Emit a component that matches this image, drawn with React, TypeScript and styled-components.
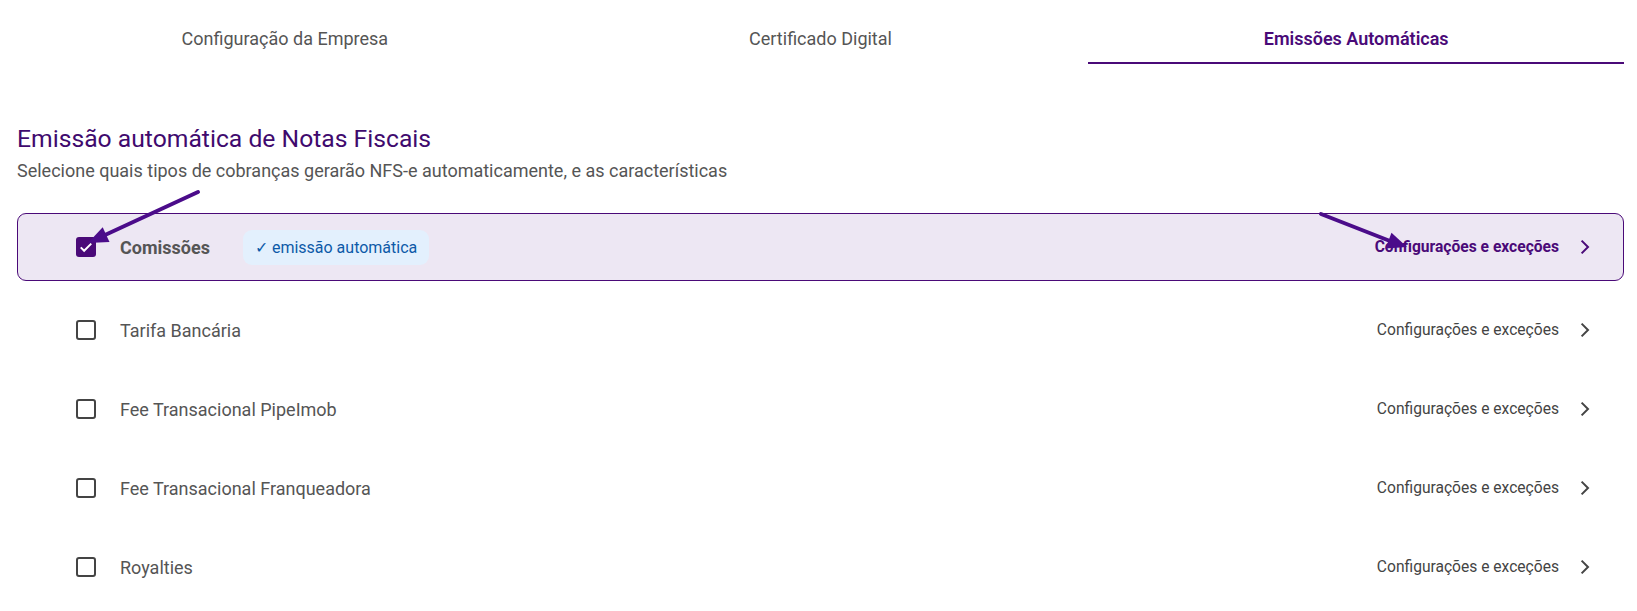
import React from "react";
import styled, { createGlobalStyle } from "styled-components";

const GlobalStyle = createGlobalStyle`
  body {
    margin: 0;
    background: #ffffff;
    font-family: Roboto, "Liberation Sans", Arial, sans-serif;
  }
`;

const Page = styled.div`
  position: relative;
  padding: 0 13px 0 17px;
`;

const Tabs = styled.div`
  display: flex;
  margin-top: 14px;
`;

const Tab = styled.div<{ active?: boolean }>`
  flex: 1;
  height: 48px;
  display: flex;
  align-items: center;
  justify-content: center;
  font-size: 18px;
  font-weight: ${(p) => (p.active ? 600 : 400)};
  color: ${(p) => (p.active ? "#4a0a78" : "#555555")};
  border-bottom: 2px solid ${(p) => (p.active ? "#4a0a78" : "transparent")};
`;

const Title = styled.h2`
  margin: 60px 0 0;
  font-size: 24.7px;
  line-height: 30px;
  font-weight: 400;
  color: #3f0a6e;
`;

const Subtitle = styled.p`
  margin: 5px 0 0;
  font-size: 18px;
  line-height: 24px;
  color: #555555;
`;

const List = styled.div`
  display: flex;
  flex-direction: column;
  gap: 11px;
  margin-top: 30px;
`;

const Row = styled.div<{ selected?: boolean }>`
  display: flex;
  align-items: center;
  height: 68px;
  box-sizing: border-box;
  padding: 0 26px 0 58px;
  border-radius: 9px;
  border: 1px solid ${(p) => (p.selected ? "#4a0a78" : "transparent")};
  background: ${(p) => (p.selected ? "#ede7f3" : "transparent")};
  margin-bottom: ${(p) => (p.selected ? "4px" : "0")};
`;

const Check = styled.span<{ checked?: boolean }>`
  width: 20px;
  height: 20px;
  box-sizing: border-box;
  border-radius: 3px;
  display: flex;
  align-items: center;
  justify-content: center;
  flex-shrink: 0;
  background: ${(p) => (p.checked ? "#4a0a78" : "transparent")};
  border: ${(p) => (p.checked ? "none" : "2px solid #444444")};
`;

const Label = styled.span<{ bold?: boolean }>`
  margin-left: 24px;
  font-size: 18px;
  font-weight: ${(p) => (p.bold ? 700 : 400)};
  color: #555555;
`;

const Badge = styled.span`
  margin-left: 33px;
  height: 35px;
  padding: 0 12px;
  display: flex;
  align-items: center;
  border-radius: 9px;
  background: #e3f0fd;
  color: #0d5aa8;
  font-size: 16px;
`;

const Settings = styled.div<{ selected?: boolean }>`
  margin-left: auto;
  display: flex;
  align-items: center;
  gap: 14px;
  font-size: 15.6px;
  font-weight: ${(p) => (p.selected ? 700 : 400)};
  color: ${(p) => (p.selected ? "#4a0a78" : "#444444")};
`;

const Overlay = styled.svg`
  position: absolute;
  left: 0;
  top: 0;
  pointer-events: none;
`;

const items = [
  "Comissões",
  "Tarifa Bancária",
  "Fee Transacional PipeImob",
  "Fee Transacional Franqueadora",
  "Royalties",
];

const Chevron = () => (
  <svg width="24" height="24" viewBox="0 0 24 24">
    <path d="M8.6 5.6 15 12l-6.4 6.4" fill="none" stroke="currentColor" strokeWidth="2" />
  </svg>
);

const App = () => {
  return (
    <>
      <GlobalStyle />
      <Page>
        <Tabs>
          <Tab>Configuração da Empresa</Tab>
          <Tab>Certificado Digital</Tab>
          <Tab active>Emissões Automáticas</Tab>
        </Tabs>
        <Title>Emissão automática de Notas Fiscais</Title>
        <Subtitle>
          Selecione quais tipos de cobranças gerarão NFS-e automaticamente, e as
          características
        </Subtitle>
        <List>
          {items.map((name, i) => {
            const selected = i === 0;
            return (
              <Row key={name} selected={selected}>
                <Check checked={selected}>
                  {selected && (
                    <svg width="18" height="18" viewBox="0 0 24 24">
                      <path
                        d="M5 12.5l4.5 4.5L19 7.5"
                        fill="none"
                        stroke="#ffffff"
                        strokeWidth="2.6"
                      />
                    </svg>
                  )}
                </Check>
                <Label bold={selected}>{name}</Label>
                {selected && <Badge>✓ emissão automática</Badge>}
                <Settings selected={selected}>
                  Configurações e exceções
                  <Chevron />
                </Settings>
              </Row>
            );
          })}
        </List>
        <Overlay width="1637" height="611">
          <line x1="198" y1="178" x2="105" y2="221" stroke="#4b0c8a" strokeWidth="4" strokeLinecap="round" />
          <polygon points="88,229 102.7,213.3 109.5,227.9" fill="#4b0c8a" />
          <line x1="1321" y1="200" x2="1390" y2="227" stroke="#4b0c8a" strokeWidth="4" strokeLinecap="round" />
          <polygon points="1407,233 1391.5,218.8 1385.5,234.4" fill="#4b0c8a" />
        </Overlay>
      </Page>
    </>
  );
};

export default App;
